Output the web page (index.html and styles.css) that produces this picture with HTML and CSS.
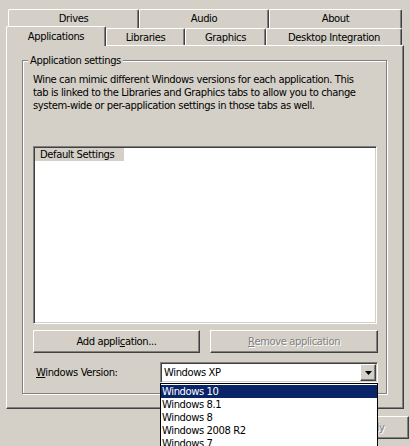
FILE: index.html
```html
<!DOCTYPE html>
<html>
<head>
<meta charset="utf-8">
<link rel="stylesheet" href="styles.css">
</head>
<body>
<div class="win">
  <div class="tabs">
    <div class="row row1">
      <div class="tab w-drives">Drives</div>
      <div class="tab w-audio">Audio</div>
      <div class="tab w-about">About</div>
    </div>
    <div class="row row2">
      <div class="tab sel w-apps">Applications</div>
      <div class="tab w-libs">Libraries</div>
      <div class="tab w-gfx">Graphics</div>
      <div class="tab w-di">Desktop Integration</div>
    </div>
  </div>
  <div class="panel">
    <div class="group">
      <span class="legend">Application settings</span>
      <p class="desc">Wine can mimic different Windows versions for each application. This<br>tab is linked to the Libraries and Graphics tabs to allow you to change<br>system-wide or per-application settings in those tabs as well.</p>
      <div class="listbox"><span class="item">Default Settings</span></div>
      <div class="btnrow">
        <div class="btn add">Add appli<u>c</u>ation...</div>
        <div class="btn remove disabled"><u>R</u>emove application</div>
      </div>
      <div class="verrow">
        <span class="lbl"><u>W</u>indows Version:</span>
        <div class="combo">
          <span class="val">Windows XP</span>
          <span class="arrowbtn"><svg width="7" height="4" viewBox="0 0 7 4"><path d="M0 0H7L3.5 4Z" fill="#000"/></svg></span>
        </div>
      </div>
    </div>
  </div>
  <div class="footer">
    <div class="btn fbtn disabled">Apply</div>
  </div>
  <div class="droplist">
    <div class="opt hi">Windows 10</div>
    <div class="opt">Windows 8.1</div>
    <div class="opt">Windows 8</div>
    <div class="opt">Windows 2008 R2</div>
    <div class="opt">Windows 7</div>
  </div>
</div>
</body>
</html>
```

FILE: styles.css
```css
* { box-sizing: border-box; }
html, body { margin: 0; padding: 0; }
body {
  width: 410px;
  height: 446px;
  overflow: hidden;
  background: #d4d0c8;
  font-family: "DejaVu Sans", sans-serif;
  font-size: 10px;
  letter-spacing: -0.4px;
  color: #000;
}
.win {
  position: relative;
  width: 410px;
  height: 446px;
  padding: 9px 0 0 6px;
}
.row { display: flex; align-items: flex-start; }
.row1 { height: 19px; margin-left: 2px; }
.row2 { height: 17px; }
.tab {
  display: flex;
  align-items: center;
  justify-content: center;
  background: #d4d0c8;
  border-top: 1px solid #fff;
  border-left: 1px solid #fff;
  border-right: 1px solid #404040;
  box-shadow: inset -1px 0 0 #808080;
  border-top-left-radius: 2px;
  border-top-right-radius: 2px;
  white-space: nowrap;
}
.row1 .tab { height: 19px; padding-bottom: 1px; }
.row2 .tab { height: 17px; padding-top: 1px; }
.row2 .tab.sel {
  position: relative;
  z-index: 2;
  height: 20px;
  margin-top: -2px;
  padding-top: 0;
}
.w-drives { width: 131px; }
.w-audio { width: 130px; }
.w-about { width: 133px; }
.w-apps { width: 100px; }
.w-libs { width: 79px; }
.w-gfx { width: 81px; }
.w-di { width: 136px; }

.panel {
  width: 398px;
  height: 364px;
  border-top: 1px solid #fff;
  border-left: 1px solid #fff;
  border-right: 1px solid #404040;
  border-bottom: 1px solid #404040;
  box-shadow: inset -1px -1px 0 #808080;
  padding: 14px 0 0 15px;
}
.group {
  position: relative;
  width: 365px;
  height: 334px;
  border: 1px solid #808080;
  box-shadow: 1px 1px 0 #fff, inset 1px 1px 0 #fff;
  padding: 12px 0 0 10px;
}
.legend {
  position: absolute;
  left: 5px;
  top: -7px;
  line-height: 13px;
  padding: 0 2px;
  background: #d4d0c8;
}
.desc {
  margin: 0;
  line-height: 13px;
  white-space: nowrap;
}
.listbox {
  margin-top: 34px;
  width: 344px;
  height: 178px;
  background: #fff;
  border-top: 1px solid #808080;
  border-left: 1px solid #808080;
  border-right: 1px solid #fff;
  border-bottom: 1px solid #fff;
  box-shadow: inset 1px 1px 0 #404040, inset -1px -1px 0 #d4d0c8;
  padding: 1px;
}
.item {
  display: inline-block;
  height: 13px;
  line-height: 13px;
  padding: 0 10px 0 5px;
  background: #d4d0c8;
}
.btnrow {
  display: flex;
  gap: 10px;
  margin-top: 6px;
}
.btn {
  display: flex;
  align-items: center;
  justify-content: center;
  height: 23px;
  background: #d4d0c8;
  border-top: 1px solid #fff;
  border-left: 1px solid #fff;
  border-right: 1px solid #404040;
  border-bottom: 1px solid #404040;
  box-shadow: inset -1px -1px 0 #808080;
  white-space: nowrap;
}
.add { width: 167px; }
.remove { width: 168px; }
.disabled {
  color: #808080;
  text-shadow: 1px 1px 0 #fff;
}
.verrow {
  display: flex;
  align-items: center;
  margin-top: 9px;
}
.lbl {
  width: 127px;
  padding-left: 3px;
}
.combo {
  display: flex;
  align-items: center;
  justify-content: space-between;
  width: 218px;
  height: 21px;
  background: #fff;
  border-top: 1px solid #808080;
  border-left: 1px solid #808080;
  border-right: 1px solid #fff;
  border-bottom: 1px solid #fff;
  box-shadow: inset 1px 1px 0 #404040, inset -1px -1px 0 #d4d0c8;
  padding: 1px 1px 1px 2px;
}
.val { padding-left: 1px; }
.arrowbtn {
  display: flex;
  align-items: center;
  justify-content: center;
  width: 16px;
  height: 17px;
  background: #d4d0c8;
  border-top: 1px solid #fff;
  border-left: 1px solid #fff;
  border-right: 1px solid #404040;
  border-bottom: 1px solid #404040;
  box-shadow: inset -1px -1px 0 #808080;
}
.footer {
  display: flex;
  justify-content: flex-end;
  width: 403px;
  margin-top: 7px;
}
.fbtn { width: 75px; }
.droplist {
  position: absolute;
  left: 160px;
  top: 383px;
  width: 218px;
  height: 80px;
  background: #fff;
  border: 1px solid #000;
  padding-top: 1px;
}
.opt {
  height: 13px;
  line-height: 13px;
  padding-left: 1px;
}
.opt.hi {
  background: #0a246a;
  color: #fff;
}
```
